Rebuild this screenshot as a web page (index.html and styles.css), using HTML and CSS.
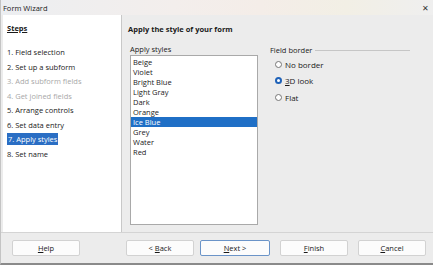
FILE: index.html
```html
<!DOCTYPE html>
<html>
  <head>
    <meta charset="utf-8">
    <title>Form Wizard</title>
    <link rel="stylesheet" href="styles.css">
  </head>
  <body>
    <div class="dialog">
      <div class="titlebar">
        <span>Form Wizard</span>
        <span class="close">&#x2715;</span>
      </div>
      <div class="main">
        <div class="steps">
          <div class="steps-head">Steps</div>
          <div class="step">1. Field selection</div>
          <div class="step">2. Set up a subform</div>
          <div class="step off">3. Add subform fields</div>
          <div class="step off">4. Get joined fields</div>
          <div class="step">5. Arrange controls</div>
          <div class="step">6. Set data entry</div>
          <div class="step"><span class="sel">7. Apply styles</span></div>
          <div class="step">8. Set name</div>
        </div>
        <div class="page">
          <div class="page-title">Apply the style of your form</div>
          <div class="cols">
            <div class="styles">
              <div class="label">Apply styles</div>
              <div class="list">
                <div>Beige</div>
                <div>Violet</div>
                <div>Bright Blue</div>
                <div>Light Gray</div>
                <div>Dark</div>
                <div>Orange</div>
                <div class="sel">Ice Blue</div>
                <div>Grey</div>
                <div>Water</div>
                <div>Red</div>
              </div>
            </div>
            <div class="border-box">
              <div class="group-head"><span>Field border</span><i></i></div>
              <div class="radio"><b></b>No border</div>
              <div class="radio on"><b></b><span><u>3</u>D look</span></div>
              <div class="radio"><b></b>Flat</div>
            </div>
          </div>
        </div>
      </div>
      <div class="buttons">
        <button><u>H</u>elp</button>
        <button class="back">&lt; <u>B</u>ack</button>
        <button class="default"><u>N</u>ext &gt;</button>
        <button class="finish"><u>F</u>inish</button>
        <button class="finish"><u>C</u>ancel</button>
      </div>
    </div>
  </body>
</html>
```

FILE: styles.css
```css
* { box-sizing: border-box; }
html, body {
  margin: 0;
  width: 433px;
  height: 265px;
  overflow: hidden;
}
body {
  font-family: "Open Sans", sans-serif;
  font-size: 7.5px;
  color: #1a1a1a;
  background: #ececec;
}
.dialog {
  height: 265px;
  display: flex;
  flex-direction: column;
  border-bottom: 2px solid #8a8a8a;
  border-left: 1px solid #c4c4c4;
}
.titlebar {
  height: 15px;
  display: flex;
  align-items: center;
  justify-content: space-between;
  padding: 0 4px 0 2px;
  background: linear-gradient(90deg, #eceef1 0%, #f3eeec 40%, #f4ede8 60%, #f2efe5 80%, #efefef 100%);
}
.close {
  font-size: 8px;
  color: #333;
}
.main {
  height: 218px;
  display: flex;
  border-bottom: 1px solid #d4d4d4;
}
.steps {
  width: 119px;
  margin-left: 2px;
  background: #fff;
  border-right: 1px solid #c8c8c8;
  padding: 8px 0 0 4px;
}
.steps-head {
  font-weight: bold;
  text-decoration: underline;
  height: 14px;
  margin-bottom: 8px;
}
.step {
  height: 14.5px;
  line-height: 14.5px;
}
.step.off {
  color: #a8a8a8;
}
.step .sel {
  background: #2a6ec4;
  color: #fff;
  padding: 1px 1px;
}
.page {
  flex: 1;
  padding: 9px 0 0 6px;
}
.page-title {
  font-weight: bold;
  height: 14px;
}
.cols {
  display: flex;
  margin-top: 6px;
}
.styles {
  width: 128px;
  margin-left: 2px;
}
.label {
  height: 10px;
  line-height: 10px;
  margin-bottom: 1px;
}
.list {
  height: 170px;
  background: #fff;
  border: 1px solid #a9a9a9;
  padding-top: 1px;
}
.list div {
  height: 10px;
  line-height: 10px;
  padding-left: 2px;
}
.list .sel {
  background: #1f6fc6;
  color: #fff;
}
.border-box {
  width: 140px;
  margin-left: 12px;
  padding-top: 1px;
}
.group-head {
  display: flex;
  align-items: center;
  height: 10px;
  margin-bottom: 1px;
}
.group-head i {
  flex: 1;
  height: 1px;
  background: #c6c6c6;
  margin-left: 3px;
}
.radio {
  display: flex;
  align-items: center;
  height: 16.5px;
  padding-left: 5px;
  font-size: 8px;
}
.radio b {
  width: 7px;
  height: 7px;
  border-radius: 50%;
  border: 1px solid #777;
  background: #fff;
  margin-right: 3px;
}
.radio.on b {
  border: 2px solid #1f62b8;
  background: #fff;
}
.buttons {
  flex: 1;
  display: flex;
  align-items: center;
  padding: 0 0 0 11px;
}
button {
  font: inherit;
  width: 68px;
  height: 16px;
  padding: 0;
  background: #fcfcfc;
  border: 1px solid #d2d2d2;
  border-radius: 2px;
  color: #1a1a1a;
}
button.back {
  margin-left: 46px;
}
button.default {
  margin-left: 6px;
  width: 70px;
  border-color: #6b94c8;
}
button.finish {
  margin-left: 10px;
}
```
